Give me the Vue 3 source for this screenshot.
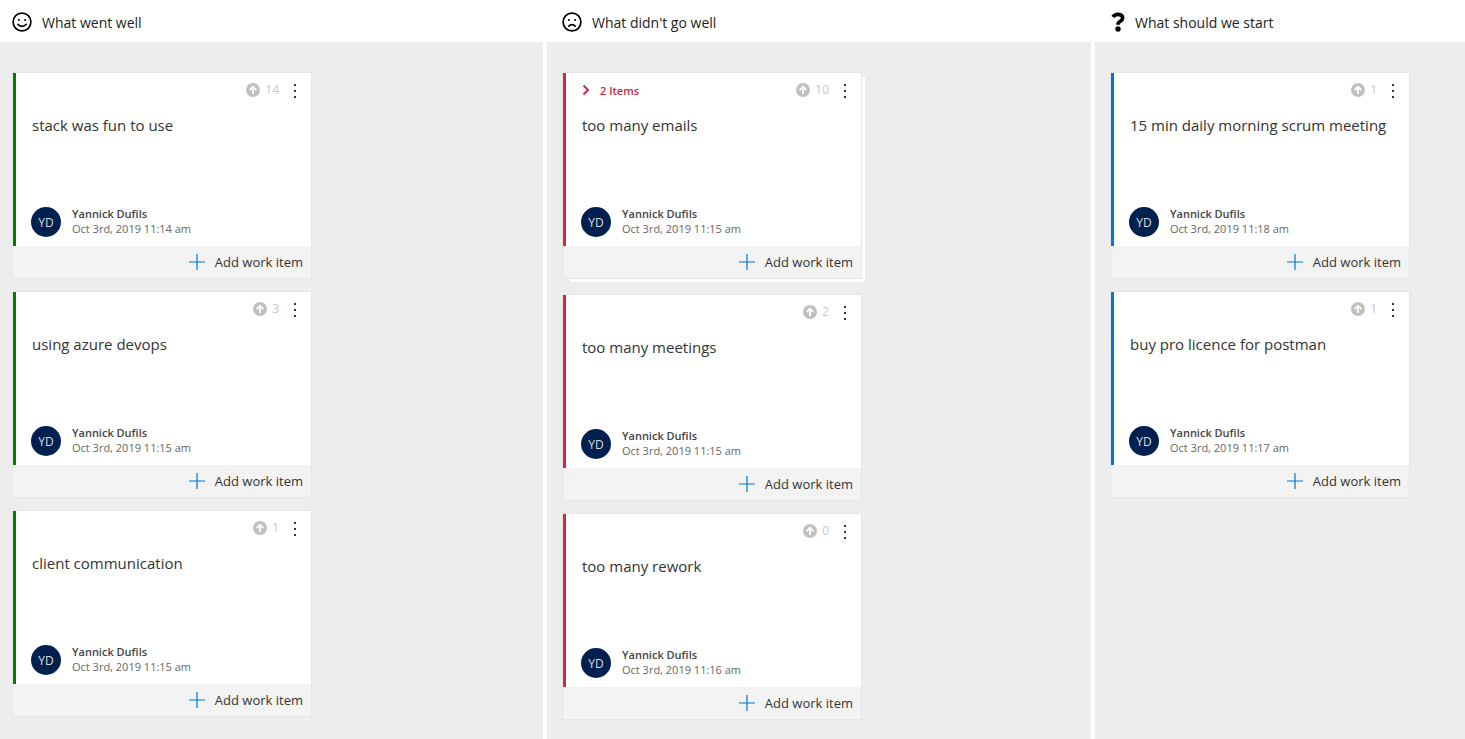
<script setup>
const author = 'Yannick Dufils'
const columns = [
  {
    title: 'What went well', tone: 'green', icon: 'smile',
    cards: [
      { text: 'stack was fun to use', votes: 14, date: 'Oct 3rd, 2019 11:14 am' },
      { text: 'using azure devops', votes: 3, date: 'Oct 3rd, 2019 11:15 am' },
      { text: 'client communication', votes: 1, date: 'Oct 3rd, 2019 11:15 am' }
    ]
  },
  {
    title: "What didn't go well", tone: 'red', icon: 'frown',
    cards: [
      { text: 'too many emails', votes: 10, date: 'Oct 3rd, 2019 11:15 am', items: 2 },
      { text: 'too many meetings', votes: 2, date: 'Oct 3rd, 2019 11:15 am' },
      { text: 'too many rework', votes: 0, date: 'Oct 3rd, 2019 11:16 am' }
    ]
  },
  {
    title: 'What should we start', tone: 'blue', icon: 'question',
    cards: [
      { text: '15 min daily morning scrum meeting', votes: 1, date: 'Oct 3rd, 2019 11:18 am' },
      { text: 'buy pro licence for postman', votes: 1, date: 'Oct 3rd, 2019 11:17 am' }
    ]
  }
]
</script>

<template>
  <main class="board">
    <section v-for="column in columns" :key="column.title" class="column" :class="column.tone">
      <header class="column-header">
        <svg v-if="column.icon === 'question'" class="question" viewBox="0 0 14 20" aria-hidden="true">
          <path d="M1.900 5C3 3.200 4.500 2.300 6.800 2.300c2.900 0 4.900 1.400 4.900 3.600 0 3.200-4.600 3.400-4.600 6.100" fill="none" stroke="#000" stroke-width="3.700" stroke-linejoin="round" />
          <path d="M5.300 11.600h3.600v1.200H5.300z" />
          <circle cx="7" cy="17" r="2.700" />
        </svg>
        <svg v-else class="face" viewBox="0 0 20 20" fill="none" stroke="#000" stroke-width="1.700" aria-hidden="true">
          <circle cx="10" cy="10" r="8.900" />
          <circle cx="6.900" cy="7.900" r="1" fill="#000" stroke="none" />
          <circle cx="13.100" cy="7.900" r="1" fill="#000" stroke="none" />
          <path v-if="column.icon === 'smile'" d="M5.800 12.300c2.100 2.700 6.300 2.700 8.400 0" stroke-linecap="round" />
          <path v-else d="M6.800 14.200c1.500-2.200 4.900-2.200 6.400 0" stroke-linecap="round" />
        </svg>
        <h2>{{ column.title }}</h2>
      </header>
      <div class="cards">
        <article v-for="card in column.cards" :key="card.text" class="card" :class="{ grouped: card.items }">
          <div class="body">
            <div class="top">
              <button v-if="card.items" class="group" type="button">
                <svg viewBox="0 0 8 12" aria-hidden="true"><path d="M1.500 1.500 6 6l-4.500 4.500" fill="none" stroke="currentColor" stroke-width="2" /></svg>
                {{ card.items }} Items
              </button>
              <button class="vote" type="button" aria-label="Vote up">
                <svg viewBox="0 0 14 14" aria-hidden="true">
                  <circle cx="7" cy="7" r="7" fill="#c0c0c0" />
                  <path d="M7 11V4M3.600 7.200 7 3.800l3.400 3.400" fill="none" stroke="#fff" stroke-width="1.700" />
                </svg>
                {{ card.votes }}
              </button>
              <button class="more" type="button" aria-label="More options">
                <svg viewBox="0 0 4 14" aria-hidden="true"><path d="M1 0h2v2H1zM1 6h2v2H1zM1 12h2v2H1z" fill="#333" /></svg>
              </button>
            </div>
            <p class="text">{{ card.text }}</p>
            <div class="author">
              <span class="avatar">YD</span>
              <div class="meta">
                <div class="name">{{ author }}</div>
                <div class="date">{{ card.date }}</div>
              </div>
            </div>
          </div>
          <footer class="footer">
            <button class="add" type="button">
              <svg viewBox="0 0 16 16" aria-hidden="true"><path d="M8 0v16M0 8h16" stroke="#0078d4" stroke-width="1.200" /></svg>
              Add work item
            </button>
          </footer>
        </article>
      </div>
    </section>
  </main>
</template>

<style>
body { margin: 0; background: #fff; }
</style>

<style scoped>
.board {
  display: grid;
  grid-template-columns: 543fr 544fr 370fr;
  column-gap: 4px;
  min-height: 100vh;
  font-family: "Segoe UI", "Open Sans", "Noto Sans", sans-serif;
  color: #333;
}
.column { display: flex; flex-direction: column; min-width: 0; }
.column-header {
  display: flex;
  align-items: center;
  gap: 10px;
  box-sizing: border-box;
  height: 42px;
  padding: 2px 15px 0;
}
.green .column-header { padding-left: 12px; }
.blue .column-header { padding-left: 16px; }
.face { width: 20px; height: 20px; }
.question { width: 14px; height: 20px; }
h2 { margin: 0; padding-top: 2px; font-size: 14px; line-height: 20px; font-weight: 400; color: #222; }
.cards {
  flex: 1;
  display: flex;
  flex-direction: column;
  gap: 14px;
  padding: 31px 16px 19px;
  background: #ededed;
}
.green .cards { padding-left: 13px; }
.card {
  position: relative;
  width: 298px;
  box-shadow: 0 0 0 1px #e6e6e6;
}
.grouped { margin-bottom: 3px; isolation: isolate; }
.grouped::before {
  content: "";
  position: absolute;
  z-index: -2;
  inset: 4px -4px -4px 7px;
  background: #fff;
}
.grouped::after {
  content: "";
  position: absolute;
  z-index: -1;
  inset: -1px;
  background: #e6e6e6;
}
.body {
  display: flex;
  flex-direction: column;
  box-sizing: border-box;
  height: 173px;
  padding: 7px 14px 8px 15px;
  border-left: 3px solid #008000;
  background: #fff;
}
.red .body { border-color: #cd2a3e; }
.blue .body { border-color: #0078d4; }
button {
  display: flex;
  align-items: center;
  margin: 0;
  padding: 0;
  border: 0;
  background: none;
  font: inherit;
  color: inherit;
  cursor: pointer;
}
.top { display: flex; align-items: center; justify-content: flex-end; height: 20px; }
.group { gap: 10px; margin-right: auto; padding-left: 1px; font-size: 11px; font-weight: 600; color: #cd2a3e; }
.group svg { width: 8px; height: 12px; }
.vote { gap: 5px; font-size: 12px; line-height: 16px; color: #c8c8c8; }
.vote svg { width: 14px; height: 14px; }
.more { margin-left: 14px; padding-top: 2px; }
.more svg { width: 4px; height: 14px; }
.text { margin: 14px 0 0; padding-left: 1px; font-size: 15px; line-height: 22px; white-space: nowrap; }
.author { display: flex; align-items: center; gap: 11px; margin-top: auto; }
.avatar {
  display: flex;
  align-items: center;
  justify-content: center;
  width: 30px;
  height: 30px;
  border-radius: 50%;
  background: #002050;
  color: #ddd;
  font-size: 12px;
}
.meta { height: 32px; }
.name { font-size: 11px; line-height: 15px; font-weight: 600; color: #444; }
.date { font-size: 11px; line-height: 15px; color: #666; }
.footer {
  display: flex;
  justify-content: flex-end;
  align-items: center;
  height: 32px;
  padding-right: 8px;
  background: #f3f3f3;
}
.add { gap: 10px; font-size: 13px; line-height: 20px; }
.add svg { width: 16px; height: 16px; }
</style>
